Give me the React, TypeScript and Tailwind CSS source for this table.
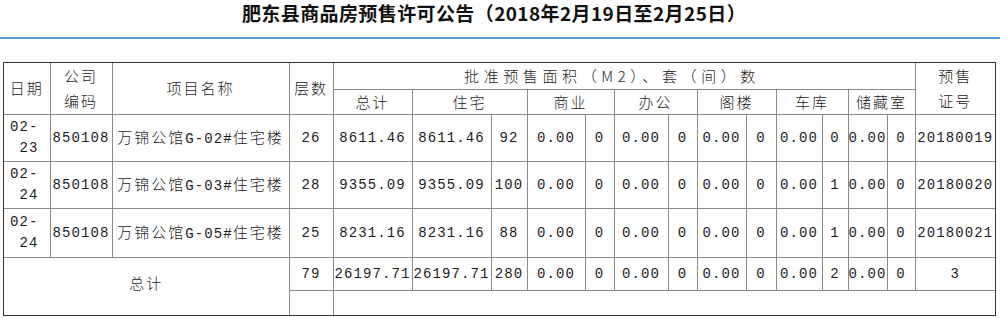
import React from "react";

const CJK = "font-['Noto_Sans_CJK_SC',sans-serif] text-[15px] leading-[20px] tracking-[2px] font-light";
const MONO = "font-['Liberation_Mono','Noto_Sans_CJK_SC',monospace] text-[14px] leading-[20px] tracking-[1.1px]";
const TD = "border border-[#8a8a8a] p-0 text-center align-middle text-[#1c1c1c] whitespace-nowrap overflow-hidden";

type Row = {
  d: string;
  name: string;
  floors: string;
  vals: string[];
  lic: string;
};

const rows: Row[] = [
  { d: "23", name: "G-02#", floors: "26", vals: ["8611.46", "8611.46", "92", "0.00", "0", "0.00", "0", "0.00", "0", "0.00", "0", "0.00", "0"], lic: "20180019" },
  { d: "24", name: "G-03#", floors: "28", vals: ["9355.09", "9355.09", "100", "0.00", "0", "0.00", "0", "0.00", "0", "0.00", "1", "0.00", "0"], lic: "20180020" },
  { d: "24", name: "G-05#", floors: "25", vals: ["8231.16", "8231.16", "88", "0.00", "0", "0.00", "0", "0.00", "0", "0.00", "1", "0.00", "0"], lic: "20180021" },
];

const totals = ["26197.71", "26197.71", "280", "0.00", "0", "0.00", "0", "0.00", "0", "0.00", "2", "0.00", "0"];

const widths = [46, 62, 177, 44, 79, 79, 36, 58, 29, 54, 29, 49, 30, 46, 26, 39, 28, 80];

const rowHeights = ["h-[47px]", "h-[47px]", "h-[49px]"];

export default function App() {
  return (
    <div className="w-[1000px] h-[318px] bg-white overflow-hidden">
      <div className="h-[26px] flex items-center justify-center pr-[12px] font-['Noto_Sans_CJK_SC',sans-serif] font-bold text-[19px] leading-[26px] tracking-[0.4px] text-[#111]">
        肥东县商品房预售许可公告（2018年2月19日至2月25日）
      </div>
      <div className="mt-[11px] h-[2px] bg-[#5d9cd3]" />
      <div className="mt-[23px] ml-[3px] w-[993px] border border-[#333]">
        <table className="table-fixed border-collapse border-hidden w-[991px]">
          <colgroup>
            {widths.map((w, i) => (
              <col key={i} style={{ width: w }} />
            ))}
          </colgroup>
          <tbody>
            <tr className="h-[26px]">
              <td rowSpan={2} className={`${TD} ${CJK}`}>日期</td>
              <td rowSpan={2} className={`${TD} ${CJK} !leading-[25px]`}>
                <div>公司</div>
                <div>编码</div>
              </td>
              <td rowSpan={2} className={`${TD} ${CJK}`}>项目名称</td>
              <td rowSpan={2} className={`${TD} ${CJK}`}>层数</td>
              <td colSpan={13} className={`${TD} font-['Noto_Sans_CJK_SC',sans-serif] font-light text-[15px] leading-[20px] tracking-[4.6px] pr-[24px]`}>
                批准预售面积（M2）、套（间）数
              </td>
              <td rowSpan={2} className={`${TD} ${CJK} !leading-[25px]`}>
                <div>预售</div>
                <div>证号</div>
              </td>
            </tr>
            <tr className="h-[25px]">
              <td className={`${TD} ${CJK}`}>总计</td>
              <td colSpan={2} className={`${TD} ${CJK}`}>住宅</td>
              <td colSpan={2} className={`${TD} ${CJK}`}>商业</td>
              <td colSpan={2} className={`${TD} ${CJK}`}>办公</td>
              <td colSpan={2} className={`${TD} ${CJK}`}>阁楼</td>
              <td colSpan={2} className={`${TD} ${CJK}`}>车库</td>
              <td colSpan={2} className={`${TD} ${CJK}`}>储藏室</td>
            </tr>
            {rows.map((r, i) => (
              <tr key={i} className={rowHeights[i]}>
                <td className={`${TD} ${MONO} !leading-[21px]`}>
                  <div className="text-right pr-[11px]">02-</div>
                  <div className="text-right pr-[11px]">{r.d}</div>
                </td>
                <td className={`${TD} ${MONO}`}>850108</td>
                <td className={`${TD} ${CJK}`}>
                  万锦公馆<span className={MONO}>{r.name}</span>住宅楼
                </td>
                <td className={`${TD} ${MONO}`}>{r.floors}</td>
                {r.vals.map((v, j) => (
                  <td key={j} className={`${TD} ${MONO}`}>{v}</td>
                ))}
                <td className={`${TD} ${MONO}`}>{r.lic}</td>
              </tr>
            ))}
            <tr className="h-[33px]">
              <td rowSpan={2} colSpan={3} className={`${TD} ${CJK} pb-[6px]`}>总计</td>
              <td className={`${TD} ${MONO}`}>79</td>
              {totals.map((v, j) => (
                <td key={j} className={`${TD} ${MONO}`}>{v}</td>
              ))}
              <td className={`${TD} ${MONO}`}>3</td>
            </tr>
            <tr className="h-[25px]">
              <td className={TD}></td>
              <td colSpan={14} className={TD}></td>
            </tr>
          </tbody>
        </table>
      </div>
    </div>
  );
}
